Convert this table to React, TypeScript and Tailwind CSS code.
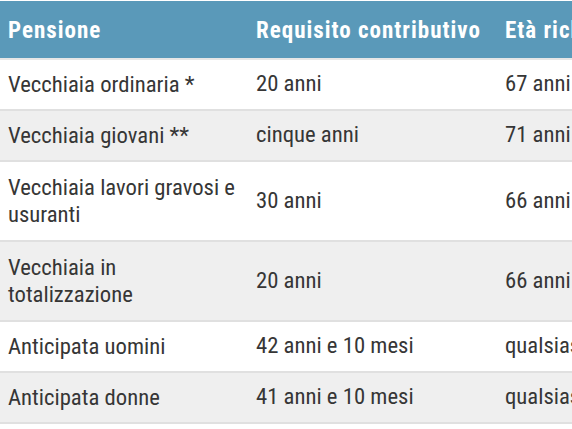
import React from 'react';

const rows = [
  { name: 'Vecchiaia ordinaria *', req: '20 anni', age: '67 anni', tall: false },
  { name: 'Vecchiaia giovani **', req: 'cinque anni', age: '71 anni', tall: false },
  { name: 'Vecchiaia lavori gravosi e usuranti', req: '30 anni', age: '66 anni', tall: true },
  { name: 'Vecchiaia in totalizzazione', req: '20 anni', age: '66 anni', tall: true },
  { name: 'Anticipata uomini', req: '42 anni e 10 mesi', age: 'qualsiasi', tall: false },
  { name: 'Anticipata donne', req: '41 anni e 10 mesi', age: 'qualsiasi', tall: false },
];

export default function App() {
  return (
    <div
      className="w-[572px] h-[429px] overflow-hidden bg-white pt-px"
      style={{ fontFamily: '"Roboto Condensed", "Liberation Sans Narrow", "DejaVu Sans Condensed", Roboto, sans-serif' }}
    >
      <table className="w-[780px] border-collapse table-fixed text-[22.7px] text-[#363636]">
        <colgroup>
          <col className="w-[248px]" />
          <col className="w-[249px]" />
          <col className="w-[283px]" />
        </colgroup>
        <thead>
          <tr className="h-[58px] bg-[#5a99b9] text-white border-b-2 border-[#e6e6e6]">
            <th className="text-left font-bold pl-2 pt-1 text-[23px] tracking-[1px]">Pensione</th>
            <th className="text-left font-bold pl-2 pt-1 text-[23px] tracking-[1px]">Requisito contributivo</th>
            <th className="text-left font-bold pl-2 pt-1 text-[23px] tracking-[1px]">Età richiesta</th>
          </tr>
        </thead>
        <tbody>
          {rows.map((r, i) => (
            <tr
              key={i}
              className={`${r.tall ? 'h-[80px]' : 'h-[51px]'} ${i % 2 ? 'bg-[#efefef]' : 'bg-white'} border-b-2 border-[#e0e0e0]`}
            >
              <td className="pl-2 pr-2 leading-[27px]">{r.name}</td>
              <td className="pl-2">{r.req}</td>
              <td className="pl-2">{r.age}</td>
            </tr>
          ))}
        </tbody>
      </table>
    </div>
  );
}
